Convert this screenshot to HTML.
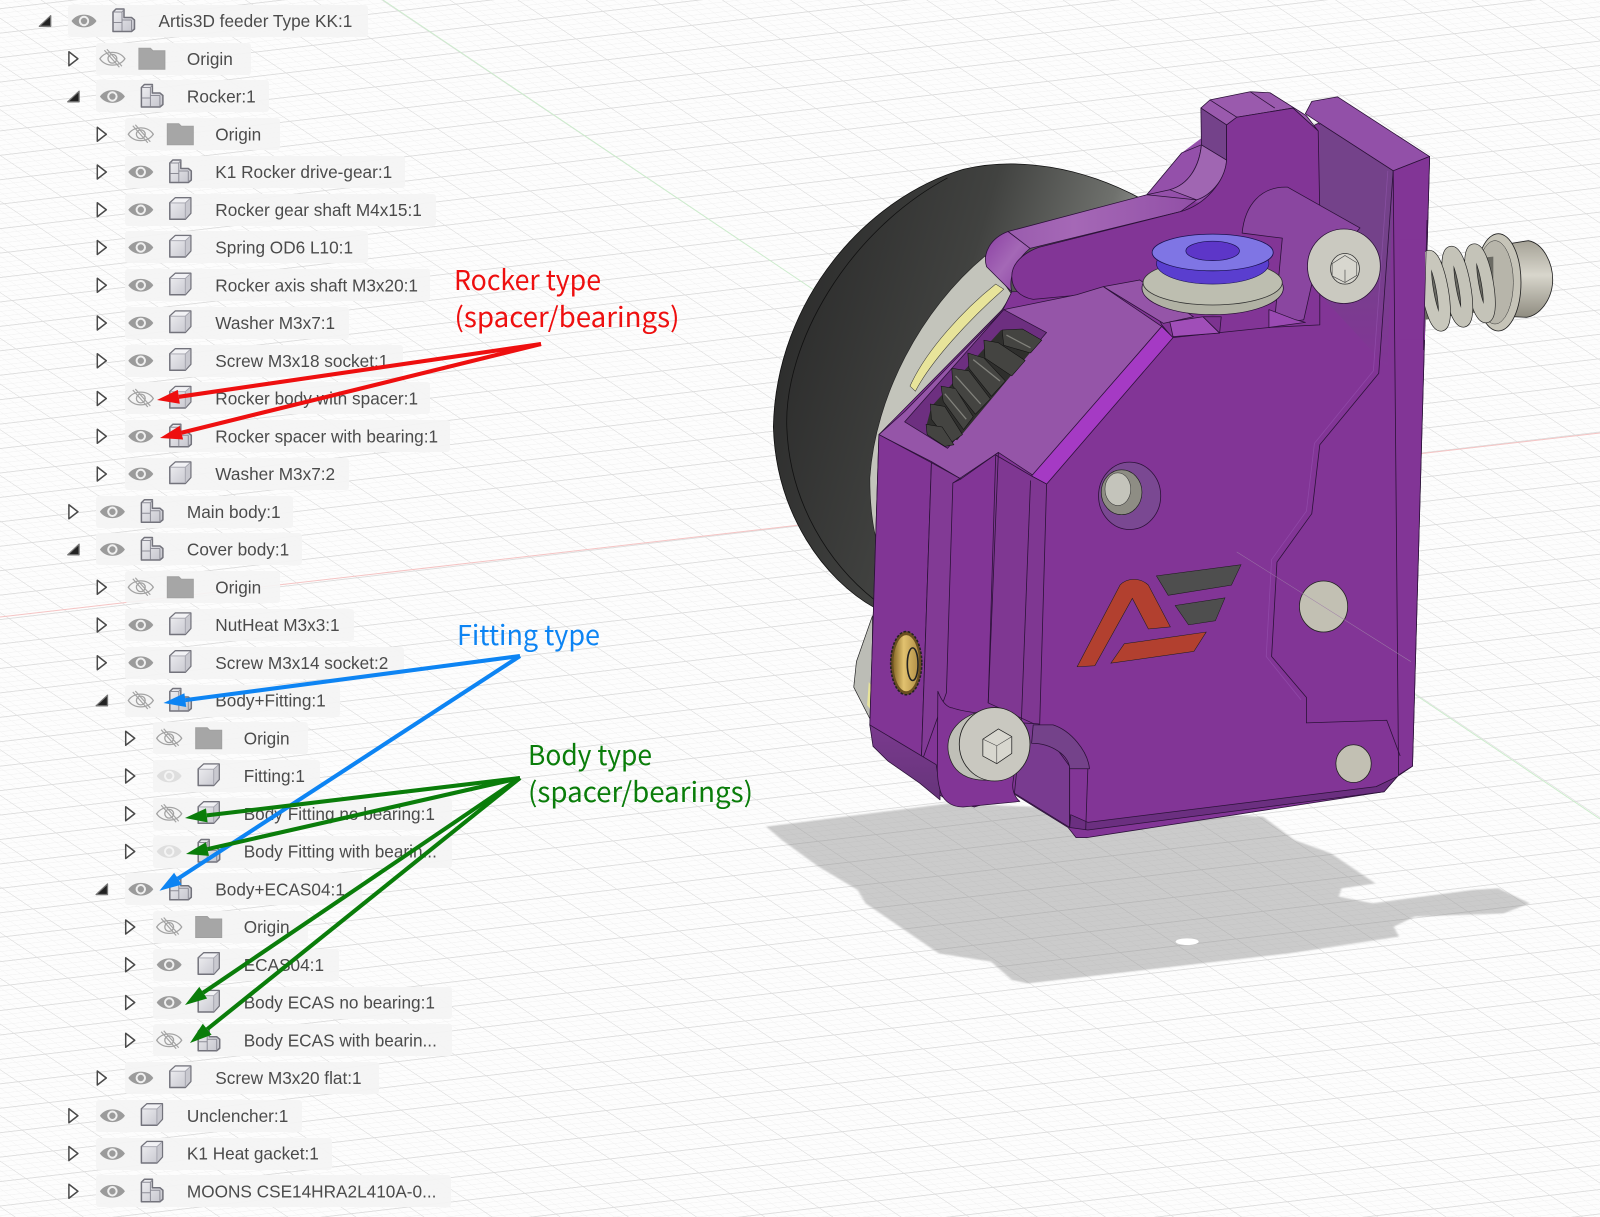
<!DOCTYPE html>
<html><head><meta charset="utf-8"><title>Artis3D feeder</title>
<style>
html,body{margin:0;padding:0;background:#fdfdfd}
body{width:1600px;height:1217px;overflow:hidden;position:relative}
svg{position:absolute;left:0;top:0;display:block}
.t{font:17.22px "Liberation Sans",Arial,sans-serif;fill:#4b4b4b}
.a{font:27.5px "Noto Sans CJK SC","Liberation Sans",sans-serif}
.p{stroke:#2b1238;stroke-width:1.5;stroke-linejoin:round}
</style></head><body>
<svg width="1600" height="1217" viewBox="0 0 1600 1217" xmlns="http://www.w3.org/2000/svg">
<defs>
<pattern id="grid" width="100" height="100" patternUnits="userSpaceOnUse" patternTransform="matrix(.58,-.068,.31,.208,1110,489)">
<rect width="100" height="100" fill="#fdfdfd"/>
<g fill="#f0f0f0">
<rect x="20" width=".9" height="100"/><rect x="40" width=".9" height="100"/><rect x="60" width=".9" height="100"/><rect x="80" width=".9" height="100"/>
<rect y="20" width="100" height="2"/><rect y="40" width="100" height="2"/><rect y="60" width="100" height="2"/><rect y="80" width="100" height="2"/>
</g>
<rect width="1.5" height="100" fill="#dcdcdc"/><rect width="100" height="3.6" fill="#dcdcdc"/>
</pattern>
<linearGradient id="cu" x1="0" y1="0" x2="1" y2="1"><stop offset="0" stop-color="#f0f0f3"/><stop offset="1" stop-color="#c4c4cc"/></linearGradient>
<linearGradient id="mot" x1="0" y1="0" x2="1" y2=".35"><stop offset="0" stop-color="#262626"/><stop offset=".55" stop-color="#414240"/><stop offset=".85" stop-color="#6f716d"/><stop offset="1" stop-color="#a4a6a2"/></linearGradient>
<linearGradient id="lev" x1="0" y1="0" x2="1" y2="0"><stop offset="0" stop-color="#9a5cae"/><stop offset=".35" stop-color="#a568b6"/><stop offset="1" stop-color="#914fa6"/></linearGradient>
<linearGradient id="cap" x1="0" y1="0" x2="1" y2="1"><stop offset="0" stop-color="#8a3fa2"/><stop offset=".5" stop-color="#a468b6"/><stop offset="1" stop-color="#8a3fa2"/></linearGradient>
<linearGradient id="brs" x1="0" y1="0" x2="1" y2="0"><stop offset="0" stop-color="#8a6b2a"/><stop offset=".4" stop-color="#e2c26f"/><stop offset="1" stop-color="#b08d45"/></linearGradient>
<linearGradient id="steel" x1="0" y1="0" x2="0" y2="1"><stop offset="0" stop-color="#a5a296"/><stop offset=".45" stop-color="#d8d6cc"/><stop offset="1" stop-color="#8f8c80"/></linearGradient>
<linearGradient id="inn" x1="0" y1="0" x2="0" y2="1"><stop offset="0" stop-color="#74428a"/><stop offset=".5" stop-color="#74428a"/><stop offset="1" stop-color="#823596"/></linearGradient>
<linearGradient id="low" x1="0" y1="0" x2="0" y2="1"><stop offset="0" stop-color="#7a3a8e"/><stop offset="1" stop-color="#66347a"/></linearGradient>
<filter id="bl" x="-5%" y="-5%" width="110%" height="110%"><feGaussianBlur stdDeviation="2"/></filter>

<g id="eye"><path d="M-12.5,0C-7,-8.5 7,-8.5 12.5,0C7,8.5 -7,8.5 -12.5,0Z" fill="#9b9b9b"/><circle r="5.2" fill="#efefef"/><circle r="3.2" fill="#9b9b9b"/></g>
<g id="eyf"><path d="M-12.5,0C-7,-8.5 7,-8.5 12.5,0C7,8.5 -7,8.5 -12.5,0Z" fill="#dedede"/><circle r="5.2" fill="#f4f4f4"/><circle r="3.2" fill="#dedede"/></g>
<g id="eyh" fill="none" stroke="#a3a3a3" stroke-width="1.3"><path d="M-12.5,0C-7,-8.5 7,-8.5 12.5,0C7,8.5 -7,8.5 -12.5,0Z"/><circle r="4.4"/><path d="M-8,-8.5L7,8.5M-5.5,-9.5L9.5,7.5" stroke-width="1.2"/></g>
<path id="cl" d="M-4.5,-7L4.5,0L-4.5,7Z" fill="#fff" stroke="#4a4a4a" stroke-width="1.5" stroke-linejoin="round"/>
<path id="op" d="M5.7,-5.3V5.3H-5.7Z" fill="#222" stroke="#777" stroke-width="1.3" stroke-linejoin="round"/>
<g id="cube" stroke-linejoin="round"><path d="M-10.5,-7L-5,-12H10.5V3.5L5,9.5H-10.5Z" fill="url(#cu)" stroke="#73737c" stroke-width="1.5"/><path d="M-10,-6.6L-4.8,-11.4H10L5,-6.6Z" fill="#f2f2f5"/><path d="M5.2,-6.4L10,-11V3.2L5.2,8.8Z" fill="#c9c9d0"/><path d="M-10,-6.8H5L10,-11.4M5,-6.8V9" fill="none" stroke="#a2a2ac" stroke-width=".9"/></g>
<g id="comp" stroke-linejoin="round"><path d="M-10.5,-9L-7.5,-12H0.5V-3.5H8L11,-1V8L8,10.5H-10.5Z" fill="url(#cu)" stroke="#73737c" stroke-width="1.5"/><path d="M-1.5,-9V10M-1.5,-1H8M-10,-9H-1.5L.5,-11.5M8,-1V10M-10,1.5H-1.5" fill="none" stroke="#8d8d97" stroke-width="1"/></g>
<path id="fold" d="M-13,-10.5H-1.5L1,-8H13V10.5H-13Z" fill="#a6a6a6" stroke="#a0a0a0"/>
</defs>

<rect width="1600" height="1217" fill="url(#grid)"/>
<line x1="0" y1="617" x2="1600" y2="433" stroke="#f5c4c4" stroke-width="1"/>
<line x1="383" y1="0" x2="1600" y2="819" stroke="#cdeccd" stroke-width="1"/>

<!-- shadow -->
<g transform="translate(740,780) scale(.523,.3333)">
<path d="M50,140L400,70L1000,110L1060,180L1130,220L1215,310L1150,325L1145,350L1210,370L1400,330L1450,325L1510,370L1460,400L1290,410L1250,440L1260,470L1050,520L550,610L520,600L480,545L380,520L240,370L225,330L150,260L80,180Z" fill="#8f8f8f" opacity=".45" filter="url(#bl)"/>
<ellipse cx="855" cy="485" rx="22" ry="10" fill="#fff"/>
</g>

<!-- 3D part -->
<g transform="translate(760,80) scale(.5357,.5102)">
<!-- motor -->
<path d="M710,232C600,170 480,150 380,175C200,230 30,430 25,680C30,850 120,980 215,1035L330,700Z" fill="url(#mot)" stroke="#111" stroke-width="1.5"/>
<path d="M350,192C160,300 45,520 50,680C55,830 130,950 215,1020" fill="none" stroke="#111" stroke-width="1.5"/>
<path d="M420,345C300,450 215,620 205,780C205,830 210,880 220,910L300,700L470,420Z" fill="#c3c4bb" stroke="#222" stroke-width="1.2"/>
<path d="M440,400L455,410C390,470 320,550 290,610L280,600C310,530 380,450 440,400Z" fill="#e8e49a" stroke="#333" stroke-width="1"/>
<path d="M210,1050L180,1140L175,1190L210,1262Z" fill="#bcbdb6" stroke="#222" stroke-width="1.3"/>
<path d="M203,1180L210,1190V1240L200,1225Z" fill="#e8e49a"/>

<!-- base silhouette -->
<path class="p" d="M222,695L455,447L470,415L640,410L870,170L1042,85L1180,180L1250,150L1218,1345L1190,1365L1165,1395L610,1485L590,1485L575,1465L475,1400L400,1425L345,1408L240,1335L205,1265Z" fill="#823596"/>

<!-- back plate -->
<path class="p" d="M1018,66L1030,42L1078,33L1250,150L1182,178L1045,85Z" fill="#9250a8"/>
<path d="M1045,85L1182,178L1172,565L1045,420Z" fill="url(#inn)"/>
<path d="M1045,85L1182,178" fill="none" class="p"/>
<path class="p" d="M1182,178L1250,150L1218,1345L1192,1362Z" fill="#823596"/>
<path d="M1182,178L1155,575L1045,715L1030,850L965,945L955,1130L1020,1210L1020,1260L1170,1255L1195,1325" fill="none" stroke="#2b1238" stroke-width="1.5"/>
<path d="M1172,178L1145,570L1035,712L1020,845L955,940L945,1130L1010,1215" fill="none" stroke="#a060bc" stroke-width="1.5" opacity=".45"/>

<!-- rocker lever -->
<path d="M722,225L787,143L824,114L880,150L880,240L815,240Z" fill="#9450aa"/>
<path class="p" d="M787,143L824,127C820,170 800,205 765,215L722,225Z" fill="#9450aa"/>
<path class="p" d="M824,127L871,157C870,190 845,225 815,235L765,215C800,205 820,170 824,127Z" fill="#a066b2"/>
<path class="p" d="M823,55L840,39L915,23L952,25L1020,70L1042,100L995,55L890,73L871,88Z" fill="#9a5aad"/>
<path d="M840,39L890,73M915,23L961,55" fill="none" class="p"/>
<path class="p" d="M823,55L871,88V157L824,127Z" fill="#74428a"/>
<path class="p" d="M463,297L722,225L815,235L785,258L504,330Z" fill="url(#lev)"/>
<path class="p" d="M463,297C430,310 415,340 423,366L470,415C465,395 470,360 504,330Z" fill="url(#cap)"/>
<path class="p" d="M470,385C470,360 490,340 520,328L785,258C830,245 868,200 871,157V88L890,73L995,55L1042,100L1045,260L1045,480L950,485L860,495L770,505L750,480L709,392L631,418L510,430C485,425 470,410 470,385Z" fill="#823596"/>

<!-- pin boss -->
<path class="p" d="M900,300C905,245 935,208 985,210L1120,290L1030,400L1015,470L960,480L975,310Z" fill="#8a46a0"/>
<path class="p" d="M950,450L1000,470L1018,475L950,485Z" fill="#9a4ab2"/>
<ellipse class="p" cx="1090" cy="365" rx="68" ry="73" fill="#cac9c0"/>
<ellipse cx="1092" cy="370" rx="27" ry="30" fill="#d8d7cf" stroke="#333" stroke-width="1.5"/>
<path d="M1068,360L1092,344L1114,358V383L1092,397L1068,384ZM1092,397V372" fill="none" stroke="#444" stroke-width="1.2"/>

<!-- top chamfer piece and faces -->
<path class="p" d="M641,405L709,392L809,464L753,477Z" fill="#9555a8"/>
<path class="p" d="M765,474L827,464L858,496L771,503Z" fill="#a04eb8"/>
<path class="p" d="M827,464H861L858,496Z" fill="#7c3390"/>
<!-- gray ring -->
<ellipse class="p" cx="845" cy="408" rx="132" ry="52" fill="#b1b2a4"/>
<ellipse cx="845" cy="397" rx="130" ry="44" fill="#bdbeb0" stroke="#333" stroke-width="1.5"/>
<!-- collet -->
<ellipse cx="845" cy="360" rx="105" ry="40" fill="#5a3ecf" stroke="#1a1250" stroke-width="1.2"/>
<ellipse cx="845" cy="338" rx="113" ry="36" fill="#7f75e4" stroke="#1a1250" stroke-width="1.5"/>
<ellipse cx="845" cy="335" rx="50" ry="19" fill="#5d36c8" stroke="#1a1250" stroke-width="1.3"/>

<!-- front top face -->
<path class="p" d="M591,421L641,405L750,483L510,775L445,730L375,782L320,748L222,695L270,650L455,450Z" fill="#9555a8"/>
<path class="p" d="M750,483L771,505L535,792L507,776Z" fill="#a53ac4"/>
<!-- gear window -->
<path class="p" d="M455,450L535,495L350,722L270,670Z" fill="#6d2f80"/>
<path d="M450,490L522,512L368,706L310,680L320,640Z" fill="#2f2f2d"/>
<g fill="#444441" stroke="#0f0f0f" stroke-width="1">
<path d="M452,490L490,488L526,510L505,535L455,520Z"/>
<path d="M418,510L445,515L495,550L470,580L420,545Z"/>
<path d="M388,535L418,545L458,590L432,620L390,565Z"/>
<path d="M358,565L390,570L430,625L402,655L360,600Z"/>
<path d="M338,600L365,605L398,660L380,685L342,630Z"/>
<path d="M318,635L345,640L378,695L355,712L320,665Z"/>
<path d="M310,675L340,680L362,715L345,718L312,695Z"/>
</g>
<path d="M398,548L448,590M365,580L412,635M460,500L505,525M345,615L385,665" stroke="#82827c" stroke-width="2.5" fill="none"/>

<!-- vertical strips -->
<path class="p" d="M222,695L320,750L301,1339L205,1264Z" fill="#813595"/>
<path class="p" d="M320,750L375,782L360,790L348,1201L301,1339Z" fill="#823a95"/>
<path class="p" d="M440,735L510,778L535,792L522,1267L426,1221Z" fill="#7f3792"/>
<path d="M505,785L488,1254" class="p" fill="none"/>
<path d="M360,790L445,730L426,1221" fill="none" class="p"/>

<!-- hole -->
<ellipse cx="690" cy="815" rx="58" ry="66" fill="#7a4892" stroke="#2b1238" stroke-width="1.5"/>
<ellipse cx="675" cy="808" rx="38" ry="44" fill="#8e8d84" stroke="#222" stroke-width="1.3"/>
<ellipse cx="668" cy="802" rx="24" ry="32" fill="#c4c4bb" stroke="#333" stroke-width="1"/>
<!-- plugs -->
<ellipse cx="1052" cy="1032" rx="45" ry="50" fill="#c2c0b3" stroke="#222" stroke-width="1.5"/>
<ellipse cx="1108" cy="1340" rx="33" ry="37" fill="#c2c0b3" stroke="#222" stroke-width="1.5"/>
<!-- brass -->
<ellipse cx="273" cy="1143" rx="29" ry="62" fill="#6a4f20" stroke="#222" stroke-width="3" stroke-dasharray="5 3"/>
<ellipse cx="273" cy="1143" rx="24" ry="55" fill="url(#brs)"/>
<ellipse cx="285" cy="1145" rx="10" ry="32" fill="none" stroke="#222" stroke-width="3"/>
<!-- logo -->
<path d="M592,1150L672,990C685,975 710,975 725,990L766,1072L725,1076L695,1016L625,1148Z" fill="#b2402f" stroke="#1c1c1c" stroke-width="1"/>
<path d="M655,1143L680,1105L833,1082L810,1120Z" fill="#b2402f" stroke="#1c1c1c" stroke-width="1"/>
<path d="M740,972L898,950L880,990L762,1010Z" fill="#4e4e4e" stroke="#1c1c1c" stroke-width="1"/>
<path d="M775,1030L868,1015L850,1060L800,1068Z" fill="#4e4e4e" stroke="#1c1c1c" stroke-width="1"/>
<!-- bottom details -->
<path class="p" d="M475,1398L488,1260L520,1262L578,1345V1465Z" fill="#793b90"/>
<path class="p" d="M510,1264H547C580,1275 612,1315 615,1350L578,1350C578,1325 545,1300 507,1300Z" fill="#74428a"/>
<path class="p" d="M578,1465L612,1470L1165,1395L1190,1365L1150,1385L612,1455L580,1440Z" fill="#6b2f80"/>
<path d="M612,1350L608,1470" class="p" fill="none"/>
<path d="M578,1350V1465" class="p" fill="none"/>
<!-- lower left foot -->
<path class="p" d="M205,1264L329,1342L336,1391V1411L298,1378L239,1335L211,1306Z" fill="url(#low)"/>
<path class="p" d="M332,1198C340,1220 350,1230 360,1231C385,1240 410,1240 429,1244L488,1260L472,1378C470,1395 478,1408 485,1414L379,1425C355,1425 340,1410 336,1391C330,1370 331,1350 331,1345Z" fill="#823596"/>
<!-- screw -->
<path d="M430,1232C370,1245 345,1280 352,1320C360,1360 390,1375 430,1372Z" fill="#bfbfb7" stroke="#222" stroke-width="1.4"/>
<ellipse cx="438" cy="1302" rx="66" ry="72" fill="#c9c8c0" stroke="#222" stroke-width="1.6"/>
<path d="M416,1292L445,1272L470,1287V1320L442,1340L416,1325Z" fill="#d8d7cf" stroke="#222" stroke-width="1.4"/>
<path d="M442,1340V1305L416,1292M442,1305L470,1287" fill="none" stroke="#444" stroke-width="1.1"/>
<path d="M890,925L1215,1140" stroke="#9e7ca8" stroke-width="1" fill="none"/>
</g>

<!-- spring -->
<g transform="translate(1380,220) scale(.3333)">
<path d="M395,70L445,62C490,70 520,130 518,185C515,240 480,285 440,292L395,290Z" fill="url(#steel)" stroke="#222" stroke-width="2.5"/>
<ellipse cx="355" cy="187" rx="68" ry="146" fill="#c6c4b8" stroke="#222" stroke-width="2.5"/>
<ellipse cx="345" cy="187" rx="55" ry="125" fill="#b7b5aa" stroke="#333" stroke-width="1.5"/>
<path d="M130,130L340,110V270L130,300Z" fill="#6a6a63"/>
<g fill="none">
<ellipse cx="300" cy="190" rx="22" ry="102" transform="rotate(-10 300 190)" stroke="#222" stroke-width="38"/>
<ellipse cx="300" cy="190" rx="22" ry="102" transform="rotate(-10 300 190)" stroke="#c4c3b8" stroke-width="34"/>
<ellipse cx="232" cy="200" rx="22" ry="105" transform="rotate(-10 232 200)" stroke="#222" stroke-width="38"/>
<ellipse cx="232" cy="200" rx="22" ry="105" transform="rotate(-10 232 200)" stroke="#c4c3b8" stroke-width="34"/>
<ellipse cx="165" cy="212" rx="22" ry="105" transform="rotate(-10 165 212)" stroke="#222" stroke-width="38"/>
<ellipse cx="165" cy="212" rx="22" ry="105" transform="rotate(-10 165 212)" stroke="#c8c7bc" stroke-width="34"/>
</g>
<rect x="60" y="60" width="75" height="300" fill="#823596"/>
<path d="M141,0L130,390" stroke="#2b1238" stroke-width="2" fill="none"/>
</g>

<!-- tree rows -->
<g fill="#f4f4f4" fill-opacity=".92">
<rect x="68" y="5" width="300" height="32" rx="3"/>
<rect x="96" y="43" width="155" height="32" rx="3"/>
<rect x="96" y="80" width="173" height="32" rx="3"/>
<rect x="125" y="118" width="155" height="32" rx="3"/>
<rect x="125" y="156" width="280" height="32" rx="3"/>
<rect x="125" y="194" width="311" height="32" rx="3"/>
<rect x="125" y="231" width="243" height="32" rx="3"/>
<rect x="125" y="269" width="305" height="32" rx="3"/>
<rect x="125" y="307" width="224" height="32" rx="3"/>
<rect x="125" y="345" width="278" height="32" rx="3"/>
<rect x="125" y="382" width="305" height="32" rx="3"/>
<rect x="125" y="420" width="325" height="32" rx="3"/>
<rect x="125" y="458" width="224" height="32" rx="3"/>
<rect x="96" y="496" width="197" height="32" rx="3"/>
<rect x="96" y="533" width="206" height="32" rx="3"/>
<rect x="125" y="571" width="155" height="32" rx="3"/>
<rect x="125" y="609" width="229" height="32" rx="3"/>
<rect x="125" y="647" width="279" height="32" rx="3"/>
<rect x="125" y="685" width="215" height="32" rx="3"/>
<rect x="153" y="722" width="155" height="32" rx="3"/>
<rect x="153" y="760" width="167" height="32" rx="3"/>
<rect x="153" y="798" width="299" height="32" rx="3"/>
<rect x="153" y="836" width="299" height="32" rx="3"/>
<rect x="125" y="873" width="237" height="32" rx="3"/>
<rect x="153" y="911" width="155" height="32" rx="3"/>
<rect x="153" y="949" width="186" height="32" rx="3"/>
<rect x="153" y="987" width="299" height="32" rx="3"/>
<rect x="153" y="1024" width="299" height="32" rx="3"/>
<rect x="125" y="1062" width="254" height="32" rx="3"/>
<rect x="96" y="1100" width="206" height="32" rx="3"/>
<rect x="96" y="1138" width="236" height="32" rx="3"/>
<rect x="96" y="1175" width="355" height="32" rx="3"/>
</g>

<g transform="translate(0,21)"><use href="#op" x="45"/><use href="#eye" x="84"/><use href="#comp" x="123.5"/><text class="t" x="158.5" y="6">Artis3D feeder Type KK:1</text></g>
<g transform="translate(28.4,58.75)"><use href="#cl" x="45"/><use href="#eyh" x="84"/><use href="#fold" x="123.5"/><text class="t" x="158.5" y="6">Origin</text></g>
<g transform="translate(28.4,96.5)"><use href="#op" x="45"/><use href="#eye" x="84"/><use href="#comp" x="123.5"/><text class="t" x="158.5" y="6">Rocker:1</text></g>
<g transform="translate(56.8,134.25)"><use href="#cl" x="45"/><use href="#eyh" x="84"/><use href="#fold" x="123.5"/><text class="t" x="158.5" y="6">Origin</text></g>
<g transform="translate(56.8,172)"><use href="#cl" x="45"/><use href="#eye" x="84"/><use href="#comp" x="123.5"/><text class="t" x="158.5" y="6">K1 Rocker drive-gear:1</text></g>
<g transform="translate(56.8,209.75)"><use href="#cl" x="45"/><use href="#eye" x="84"/><use href="#cube" x="123.5"/><text class="t" x="158.5" y="6">Rocker gear shaft M4x15:1</text></g>
<g transform="translate(56.8,247.5)"><use href="#cl" x="45"/><use href="#eye" x="84"/><use href="#cube" x="123.5"/><text class="t" x="158.5" y="6">Spring OD6 L10:1</text></g>
<g transform="translate(56.8,285.25)"><use href="#cl" x="45"/><use href="#eye" x="84"/><use href="#cube" x="123.5"/><text class="t" x="158.5" y="6">Rocker axis shaft M3x20:1</text></g>
<g transform="translate(56.8,323)"><use href="#cl" x="45"/><use href="#eye" x="84"/><use href="#cube" x="123.5"/><text class="t" x="158.5" y="6">Washer M3x7:1</text></g>
<g transform="translate(56.8,360.75)"><use href="#cl" x="45"/><use href="#eye" x="84"/><use href="#cube" x="123.5"/><text class="t" x="158.5" y="6">Screw M3x18 socket:1</text></g>
<g transform="translate(56.8,398.5)"><use href="#cl" x="45"/><use href="#eyh" x="84"/><use href="#cube" x="123.5"/><text class="t" x="158.5" y="6">Rocker body with spacer:1</text></g>
<g transform="translate(56.8,436.25)"><use href="#cl" x="45"/><use href="#eye" x="84"/><use href="#comp" x="123.5"/><text class="t" x="158.5" y="6">Rocker spacer with bearing:1</text></g>
<g transform="translate(56.8,474)"><use href="#cl" x="45"/><use href="#eye" x="84"/><use href="#cube" x="123.5"/><text class="t" x="158.5" y="6">Washer M3x7:2</text></g>
<g transform="translate(28.4,511.75)"><use href="#cl" x="45"/><use href="#eye" x="84"/><use href="#comp" x="123.5"/><text class="t" x="158.5" y="6">Main body:1</text></g>
<g transform="translate(28.4,549.5)"><use href="#op" x="45"/><use href="#eye" x="84"/><use href="#comp" x="123.5"/><text class="t" x="158.5" y="6">Cover body:1</text></g>
<g transform="translate(56.8,587.25)"><use href="#cl" x="45"/><use href="#eyh" x="84"/><use href="#fold" x="123.5"/><text class="t" x="158.5" y="6">Origin</text></g>
<g transform="translate(56.8,625)"><use href="#cl" x="45"/><use href="#eye" x="84"/><use href="#cube" x="123.5"/><text class="t" x="158.5" y="6">NutHeat M3x3:1</text></g>
<g transform="translate(56.8,662.75)"><use href="#cl" x="45"/><use href="#eye" x="84"/><use href="#cube" x="123.5"/><text class="t" x="158.5" y="6">Screw M3x14 socket:2</text></g>
<g transform="translate(56.8,700.5)"><use href="#op" x="45"/><use href="#eyh" x="84"/><use href="#comp" x="123.5"/><text class="t" x="158.5" y="6">Body+Fitting:1</text></g>
<g transform="translate(85.2,738.25)"><use href="#cl" x="45"/><use href="#eyh" x="84"/><use href="#fold" x="123.5"/><text class="t" x="158.5" y="6">Origin</text></g>
<g transform="translate(85.2,776)"><use href="#cl" x="45"/><use href="#eyf" x="84"/><use href="#cube" x="123.5"/><text class="t" x="158.5" y="6">Fitting:1</text></g>
<g transform="translate(85.2,813.75)"><use href="#cl" x="45"/><use href="#eyh" x="84"/><use href="#cube" x="123.5"/><text class="t" x="158.5" y="6">Body Fitting no bearing:1</text></g>
<g transform="translate(85.2,851.5)"><use href="#cl" x="45"/><use href="#eyf" x="84"/><use href="#comp" x="123.5"/><text class="t" x="158.5" y="6">Body Fitting with bearin...</text></g>
<g transform="translate(56.8,889.25)"><use href="#op" x="45"/><use href="#eye" x="84"/><use href="#comp" x="123.5"/><text class="t" x="158.5" y="6">Body+ECAS04:1</text></g>
<g transform="translate(85.2,927)"><use href="#cl" x="45"/><use href="#eyh" x="84"/><use href="#fold" x="123.5"/><text class="t" x="158.5" y="6">Origin</text></g>
<g transform="translate(85.2,964.75)"><use href="#cl" x="45"/><use href="#eye" x="84"/><use href="#cube" x="123.5"/><text class="t" x="158.5" y="6">ECAS04:1</text></g>
<g transform="translate(85.2,1002.5)"><use href="#cl" x="45"/><use href="#eye" x="84"/><use href="#cube" x="123.5"/><text class="t" x="158.5" y="6">Body ECAS no bearing:1</text></g>
<g transform="translate(85.2,1040.25)"><use href="#cl" x="45"/><use href="#eyh" x="84"/><use href="#comp" x="123.5"/><text class="t" x="158.5" y="6">Body ECAS with bearin...</text></g>
<g transform="translate(56.8,1078)"><use href="#cl" x="45"/><use href="#eye" x="84"/><use href="#cube" x="123.5"/><text class="t" x="158.5" y="6">Screw M3x20 flat:1</text></g>
<g transform="translate(28.4,1115.75)"><use href="#cl" x="45"/><use href="#eye" x="84"/><use href="#cube" x="123.5"/><text class="t" x="158.5" y="6">Unclencher:1</text></g>
<g transform="translate(28.4,1153.5)"><use href="#cl" x="45"/><use href="#eye" x="84"/><use href="#cube" x="123.5"/><text class="t" x="158.5" y="6">K1 Heat gacket:1</text></g>
<g transform="translate(28.4,1191.25)"><use href="#cl" x="45"/><use href="#eye" x="84"/><use href="#comp" x="123.5"/><text class="t" x="158.5" y="6">MOONS CSE14HRA2L410A-0...</text></g>

<!-- arrows -->
<g stroke="#ee0f0f" stroke-width="4.1" fill="#ee0f0f">
<line x1="541" y1="344" x2="178.8" y2="396.8"/><line x1="541" y1="344" x2="181.4" y2="432.7"/>
<polygon stroke="none" points="157,400 179.8,403.7 177.8,389.9"/>
<polygon stroke="none" points="160,438 183.1,439.5 179.7,425.9"/>
</g>
<g stroke="#0d84f3" stroke-width="4.1" fill="#0d84f3">
<line x1="520" y1="656" x2="185.3" y2="700.1"/><line x1="520" y1="656" x2="177.9" y2="878.7"/>
<polygon stroke="none" points="163.5,703 186.2,707 184.4,693.2"/>
<polygon stroke="none" points="159.5,890.7 181.7,884.6 174.1,872.8"/>
</g>
<g stroke="#0a7d0a" stroke-width="4.1" fill="#0a7d0a">
<line x1="520" y1="778" x2="206.8" y2="815.4"/><line x1="520" y1="778" x2="207.5" y2="849.1"/>
<line x1="520" y1="778" x2="203.2" y2="992.7"/><line x1="520" y1="778" x2="207.2" y2="1029.2"/>
<polygon stroke="none" points="185,818 207.6,822.4 206,808.4"/>
<polygon stroke="none" points="186,854 209,855.9 205.9,842.3"/>
<polygon stroke="none" points="185,1005 207.1,998.5 199.3,986.9"/>
<polygon stroke="none" points="190,1043 211.6,1034.7 202.8,1023.7"/>
</g>

<text class="a" x="454" y="290" fill="#ee0f0f" textLength="147" lengthAdjust="spacingAndGlyphs">Rocker type</text>
<text class="a" x="454.5" y="327" fill="#ee0f0f" textLength="225" lengthAdjust="spacingAndGlyphs">(spacer/bearings)</text>
<text class="a" x="457" y="645" fill="#0d84f3" textLength="143" lengthAdjust="spacingAndGlyphs">Fitting type</text>
<text class="a" x="528" y="765" fill="#0a7d0a" textLength="124" lengthAdjust="spacingAndGlyphs">Body type</text>
<text class="a" x="528" y="802" fill="#0a7d0a" textLength="225" lengthAdjust="spacingAndGlyphs">(spacer/bearings)</text>
</svg>
</body></html>
